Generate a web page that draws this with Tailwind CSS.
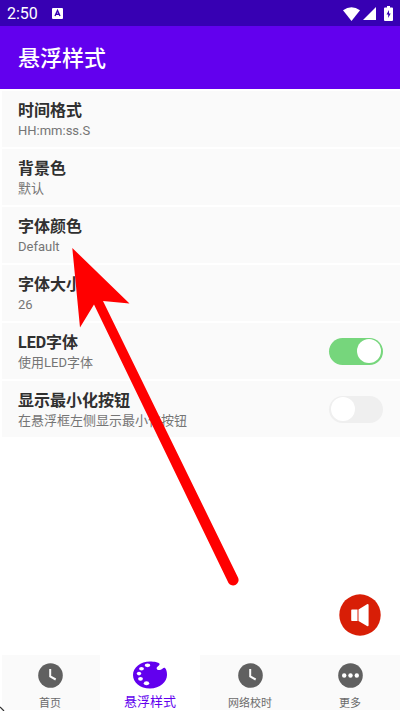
<!DOCTYPE html>
<html lang="zh-CN">
<head>
<meta charset="utf-8">
<meta name="viewport" content="width=device-width, initial-scale=1">
<title>悬浮样式</title>
<script src="https://cdn.jsdelivr.net/npm/@tailwindcss/browser@4"></script>
</head>
<body class="relative flex min-h-screen flex-col bg-white font-[Roboto,'Noto_Sans_CJK_SC',sans-serif] text-[#303030]">
  <div class="flex h-[26px] items-center bg-[#3700b3] px-[7px] pt-px text-white">
    <span class="text-base leading-5">2:50</span>
    <svg class="ml-[14px] size-[11px]" viewBox="0 0 11 11" aria-hidden="true"><rect width="11" height="11" rx="1" fill="#fff"/><path d="M3 8 5.5 2.5 8 8M4 6.3h3" fill="none" stroke="#3700b3" stroke-width="1.4"/></svg>
    <div class="ml-auto flex items-center">
      <svg class="h-[14px] w-[17px]" viewBox="0 0 17 14" aria-hidden="true"><path d="M0 3.2Q8.500-2.600 17 3.200L8.500 14Z" fill="#fff"/></svg>
      <svg class="ml-[3px] size-[13px]" viewBox="0 0 13 13" aria-hidden="true"><path d="M13 0V13H0Z" fill="#fff"/></svg>
      <svg class="ml-2 h-[15px] w-[9px]" viewBox="0 0 9 15" aria-hidden="true"><path d="M3 0h3v1.500h2q1 0 1 1V14q0 1-1 1H1q-1 0-1-1V2.500q0-1 1-1h2Z" fill="#fff"/><path d="M5 4 2.500 8.500H4.200V12L6.700 7.500H5Z" fill="#3700b3"/></svg>
    </div>
  </div>
  <header class="flex h-[63px] items-center bg-[#6200ee] px-[18px] pt-[2px] text-white">
    <h1 class="text-[22px] leading-8 font-medium">悬浮样式</h1>
  </header>

  <main class="flex flex-col pl-[2px]">
    <button type="button" class="flex h-[58px] flex-col justify-center border-t-2 border-white bg-[#fafafa] px-4 pt-1 text-left"><span class="text-base leading-5 font-bold">时间格式</span><span class="text-[13px] leading-5 text-[#757575]">HH:mm:ss.S</span></button>
    <button type="button" class="flex h-[58px] flex-col justify-center border-t-2 border-white bg-[#fafafa] px-4 pt-1 text-left"><span class="text-base leading-5 font-bold">背景色</span><span class="text-[13px] leading-5 text-[#757575]">默认</span></button>
    <button type="button" class="flex h-[58px] flex-col justify-center border-t-2 border-white bg-[#fafafa] px-4 pt-1 text-left"><span class="text-base leading-5 font-bold">字体颜色</span><span class="text-[13px] leading-5 text-[#757575]">Default</span></button>
    <button type="button" class="flex h-[58px] flex-col justify-center border-t-2 border-white bg-[#fafafa] px-4 pt-1 text-left"><span class="text-base leading-5 font-bold">字体大小</span><span class="text-[13px] leading-5 text-[#757575]">26</span></button>
    <label for="led" class="flex h-[58px] items-center justify-between border-t-2 border-white bg-[#fafafa] pr-[17px] pl-4">
      <span class="flex flex-col pt-1"><span class="text-base leading-5 font-bold">LED字体</span><span class="text-[13px] leading-5 text-[#757575]">使用LED字体</span></span>
      <input id="led" type="checkbox" role="switch" checked class="flex h-[27px] w-[54px] appearance-none items-center rounded-full bg-[#efefef] px-[2px] before:size-[24px] before:rounded-full before:bg-white checked:justify-end checked:bg-[#76d67c]">
    </label>
    <label for="mini" class="flex h-[58px] items-center justify-between border-t-2 border-white bg-[#fafafa] pr-[17px] pl-4">
      <span class="flex flex-col pt-1"><span class="text-base leading-5 font-bold">显示最小化按钮</span><span class="text-[13px] leading-5 text-[#757575]">在悬浮框左侧显示最小化按钮</span></span>
      <input id="mini" type="checkbox" role="switch" class="flex h-[27px] w-[54px] appearance-none items-center rounded-full bg-[#efefef] px-[2px] before:size-[24px] before:rounded-full before:bg-white checked:justify-end checked:bg-[#76d67c]">
    </label>
  </main>

  <nav class="mt-auto grid h-14 grid-cols-4 pb-px text-[11px] leading-3 text-[#6a6a6a]">
    <a href="#home" class="ml-[2px] flex flex-col items-center justify-between bg-[#fafafa] pt-2 pr-[2px]">
      <svg class="size-[25px]" viewBox="0 0 25 25" aria-hidden="true"><circle cx="12.500" cy="12.500" r="12.300" fill="#606060"/><path d="M12.200 6v7.500l5.500 3" fill="none" stroke="#fafafa" stroke-width="2"/></svg>
      <span>首页</span>
    </a>
    <a href="#style" aria-current="page" class="flex flex-col items-center justify-between pt-1.5 text-[13px] leading-4 text-[#6200ee]">
      <svg class="h-[28px] w-[34px]" viewBox="0 0 34 29" preserveAspectRatio="none" aria-hidden="true"><path d="M17 .5C7.500.5 0 7 0 14.500S7 28.500 17 28.500C27 28.500 34 21.500 34 14.500 34 11.500 33.500 9 32 7.300 30.800 6 29.300 8.600 27 9.300 24.800 9.900 23 8.500 23.800 6.700 24.300 5.500 27.200 4.500 26.500 2.800 25.500 1.300 21 .5 17 .5Z" fill="#6200ee"/><g fill="#fff"><ellipse cx="14.500" cy="4.500" rx="2.800" ry="1.900"/><ellipse cx="8.500" cy="8" rx="2.400" ry="1.800"/><ellipse cx="6" cy="13" rx="2.200" ry="1.900"/><ellipse cx="7.500" cy="18.500" rx="2.400" ry="1.900"/><ellipse cx="13.500" cy="23" rx="2.700" ry="2"/></g></svg>
      <span>悬浮样式</span>
    </a>
    <a href="#time" class="flex flex-col items-center justify-between bg-[#fafafa] pt-2">
      <svg class="size-[25px]" viewBox="0 0 25 25" aria-hidden="true"><circle cx="12.500" cy="12.500" r="12.300" fill="#606060"/><path d="M12.200 6v7.500l5.500 3" fill="none" stroke="#fafafa" stroke-width="2"/></svg>
      <span>网络校时</span>
    </a>
    <a href="#more" class="flex flex-col items-center justify-between bg-[#fafafa] pt-2">
      <svg class="size-[25px]" viewBox="0 0 25 25" aria-hidden="true"><circle cx="12.500" cy="12.500" r="12.300" fill="#606060"/><g fill="#fff"><circle cx="6.200" cy="12.500" r="2.200"/><circle cx="12.500" cy="12.500" r="2.200"/><circle cx="18.800" cy="12.500" r="2.200"/></g></svg>
      <span>更多</span>
    </a>
  </nav>

  <button type="button" aria-label="声音" class="absolute right-[19px] bottom-[75px] size-[42px] rounded-full">
    <svg class="size-full" viewBox="0 0 42 42" aria-hidden="true"><circle cx="21" cy="21" r="20.700" fill="#d81e06"/><path d="M13 15.500h5.500v11.500H13q-.8 0-.8-.8V16.300q0-.8.8-.8ZM19.500 15.500 28 10.300q1.600-.8 1.600 1V31q0 1.800-1.600 1L19.500 27Z" fill="#fff"/></svg>
  </button>

  <svg class="pointer-events-none absolute top-[247px] left-[72px] h-[340px] w-[168px]" viewBox="72 247 168 340" aria-hidden="true"><path d="M72.300 248 129.500 303.500 103 301 238 577.500A5.500 5.500 0 0 1 228.500 583L94 304.500 80 327.500Z" fill="#f00"/></svg>
  <svg class="pointer-events-none absolute bottom-0 left-0 size-[5px]" viewBox="0 0 5 5" aria-hidden="true"><path d="M0 1 4 5" stroke="#333" stroke-width="1.200"/></svg>
</body>
</html>
